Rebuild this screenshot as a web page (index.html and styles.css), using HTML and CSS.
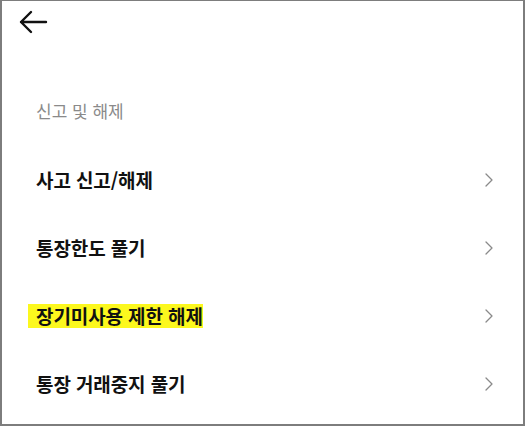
FILE: index.html
```html
<!DOCTYPE html>
<html lang="ko">
<head>
<meta charset="utf-8">
<title>신고 및 해제</title>
<link rel="stylesheet" href="styles.css">
</head>
<body>
<div class="page">
  <header class="topbar">
    <span class="back" aria-label="뒤로">
      <svg width="30" height="26" viewBox="0 0 30 26" fill="none" stroke="#111" stroke-width="2.4" stroke-linecap="round" stroke-linejoin="round">
        <path d="M3 13 H28 M13 3 L3 13 L13 23"/>
      </svg>
    </span>
  </header>
  <div class="section-label">신고 및 해제</div>
  <ul class="menu">
    <li class="item"><span class="item-text">사고 신고/해제</span><svg class="chev" width="10" height="14" viewBox="0 0 10 14" fill="none" stroke="#8a8a8a" stroke-width="1.3" stroke-linecap="round" stroke-linejoin="round"><path d="M2 1 L8 7 L2 13"/></svg></li>
    <li class="item"><span class="item-text">통장한도 풀기</span><svg class="chev" width="10" height="14" viewBox="0 0 10 14" fill="none" stroke="#8a8a8a" stroke-width="1.3" stroke-linecap="round" stroke-linejoin="round"><path d="M2 1 L8 7 L2 13"/></svg></li>
    <li class="item"><span class="item-text highlight">장기미사용 제한 해제</span><svg class="chev" width="10" height="14" viewBox="0 0 10 14" fill="none" stroke="#8a8a8a" stroke-width="1.3" stroke-linecap="round" stroke-linejoin="round"><path d="M2 1 L8 7 L2 13"/></svg></li>
    <li class="item"><span class="item-text">통장 거래중지 풀기</span><svg class="chev" width="10" height="14" viewBox="0 0 10 14" fill="none" stroke="#8a8a8a" stroke-width="1.3" stroke-linecap="round" stroke-linejoin="round"><path d="M2 1 L8 7 L2 13"/></svg></li>
  </ul>
</div>
</body>
</html>
```
FILE: styles.css
```css
* { box-sizing: border-box; }
html, body { margin: 0; padding: 0; background: #fff; }
body { font-family: "Noto Sans CJK KR", "Noto Sans", sans-serif; }
.page {
  width: 525px;
  height: 426px;
  border-style: solid;
  border-color: #7d7d7d;
  border-width: 1px 2px 2px 2px;
  background: #fff;
  overflow: hidden;
}
.topbar {
  height: 43px;
  display: flex;
  align-items: center;
  padding-left: 16px;
}
.back { display: flex; margin-top: -2px; }
.section-label {
  margin-top: 55px;
  padding-left: 34px;
  height: 24px;
  line-height: 24px;
  font-size: 17px;
  color: #8a8a8a;
}
.menu {
  list-style: none;
  margin: 23px 0 0;
  padding: 0;
}
.item {
  height: 68px;
  display: flex;
  align-items: center;
  justify-content: space-between;
  padding-left: 34px;
  padding-right: 29px;
}
.item-text {
  font-size: 19px;
  font-weight: 700;
  color: #111;
  line-height: 24px;
  letter-spacing: -0.1px;
}
.highlight {
  display: inline-block;
  background: #fcf81e;
  margin-left: -8px;
  padding-left: 8px;
}
.chev { display: block; }
```
